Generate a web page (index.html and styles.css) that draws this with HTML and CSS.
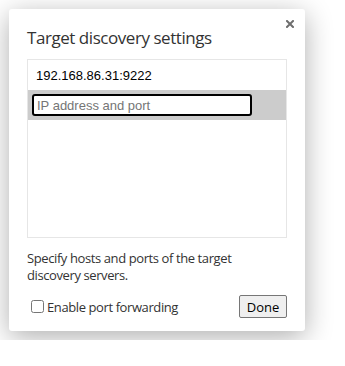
FILE: index.html
```html
<!DOCTYPE html>
<html lang="en">
<head>
    <meta charset="UTF-8">
    <title>Target discovery settings</title>
    <link rel="stylesheet" href="styles.css">
</head>
<body>
    <div class="dialog">
        <div class="close-btn">
            <svg width="8" height="8" viewBox="0 0 8 8">
                <path d="M1 1 L7 7 M7 1 L1 7" stroke="#6e6e6e" stroke-width="2" stroke-linecap="square"/>
            </svg>
        </div>
        <h1 class="title">Target discovery settings</h1>

        <div class="list">
            <div class="list-item">192.168.86.31:9222</div>
            <div class="list-item editing">
                <input class="addr-input" type="text" placeholder="IP address and port">
            </div>
        </div>

        <p class="note">Specify hosts and ports of the target discovery servers.</p>

        <div class="footer">
            <label class="check">
                <input type="checkbox">
                <span>Enable port forwarding</span>
            </label>
            <button class="done-btn">Done</button>
        </div>
    </div>
</body>
</html>
```

FILE: styles.css
```css
body {
    margin: 0;
    background-color: #fff;
    font-family: "Open Sans", "Noto Sans", sans-serif;
}

.dialog {
    position: relative;
    box-sizing: border-box;
    width: 296px;
    height: 322px;
    margin: 9px;
    padding: 0 18px 13px 18px;
    background-color: #fff;
    border-radius: 3px;
    box-shadow: 0 6px 28px rgba(0, 0, 0, 0.32);
    display: flex;
    flex-direction: column;
}

.close-btn {
    position: absolute;
    top: 11px;
    right: 11px;
    width: 8px;
    height: 8px;
    line-height: 0;
}

.title {
    margin: 17px 0 0 0;
    font-size: 17px;
    letter-spacing: -0.45px;
    font-weight: normal;
    color: #333;
    line-height: 24px;
    height: 33px;
}

.list {
    height: 179px;
    box-sizing: border-box;
    border: 1px solid #e6e6e6;
}

.list-item {
    height: 30px;
    box-sizing: border-box;
    padding: 0 0 0 8px;
    display: flex;
    align-items: center;
    font-family: "Liberation Sans", Arial, sans-serif;
    font-size: 13px;
    color: #000;
}

.list-item.editing {
    background-color: #ccc;
    padding-left: 4px;
}

.addr-input {
    box-sizing: border-box;
    width: 220px;
    height: 22px;
    margin: 0;
    padding: 0 3px;
    border: 2px solid #000;
    border-radius: 3px;
    outline: none;
    background-color: #fff;
    font-family: "Liberation Sans", Arial, sans-serif;
    font-size: 13px;
}

.addr-input::placeholder {
    color: #757575;
}

.note {
    max-width: 250px;
    margin: 12px 0 0 0;
    font-size: 13px;
    letter-spacing: -0.4px;
    line-height: 17px;
    color: #333;
}

.footer {
    margin-top: auto;
    display: flex;
    align-items: center;
    justify-content: space-between;
}

.check {
    display: flex;
    align-items: center;
    font-size: 13px;
    letter-spacing: -0.4px;
    color: #333;
    padding-left: 4px;
}

.check input {
    width: 13px;
    height: 13px;
    margin: 0 3px 0 0;
}

.done-btn {
    box-sizing: border-box;
    width: 48px;
    height: 23px;
    padding: 0;
    border: 1px solid #767676;
    border-radius: 2px;
    background-color: #efefef;
    font-family: "Open Sans", "Noto Sans", sans-serif;
    font-size: 13px;
    color: #000;
}
```
